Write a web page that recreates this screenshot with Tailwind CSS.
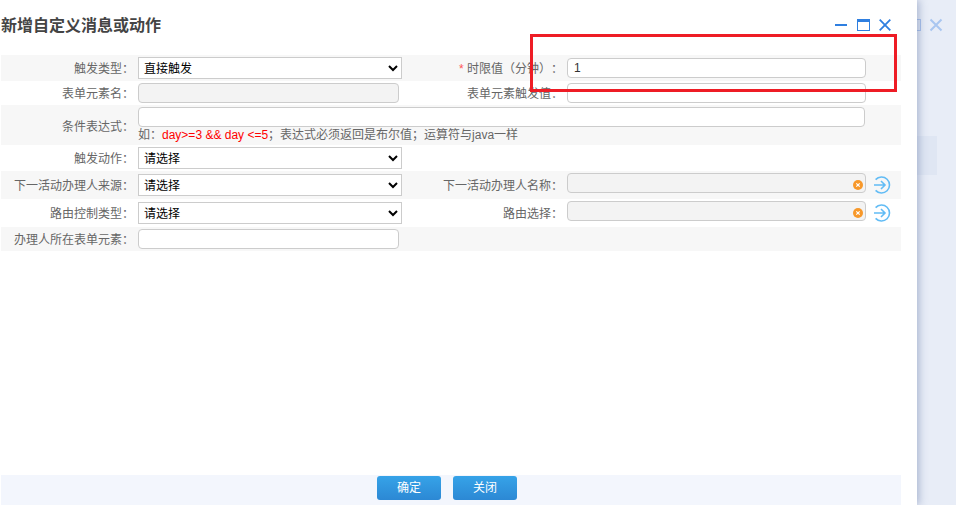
<!DOCTYPE html>
<html lang="zh-CN">
<head>
  <meta charset="UTF-8">
  <title>新增自定义消息或动作</title>
  <script src="https://cdn.jsdelivr.net/npm/@tailwindcss/browser@4"></script>
</head>
<body class="bg-[#e8edf7] font-['Liberation_Sans','Noto_Sans_CJK_SC',sans-serif] text-xs text-[#666] [text-spacing-trim:space-all]">
  <div class="relative h-[505px] w-[956px] overflow-hidden">
    <!-- page behind the dialog -->
    <div class="absolute left-[917px] top-[136px] h-[39px] w-[20px] bg-[#dfe6f3]"></div>
    <div class="absolute left-[914px] top-[19px] h-[12px] w-[7px] border border-[#a9c2ec] bg-[#dfe6f3]"></div>
    <svg class="absolute left-[929px] top-[18px]" width="14" height="14" viewBox="0 0 14 14" fill="none" stroke="#a9c6f0" stroke-width="2"><path d="M1.500 1.500l11 11M12.500 1.500l-11 11"/></svg>

    <!-- dialog -->
    <div class="absolute inset-y-0 left-0 flex w-[917px] flex-col bg-white pl-px pr-[16px] shadow-[2px_0_8px_rgba(90,110,160,0.45)]">
      <div class="flex h-[55px] items-start justify-between">
        <h1 class="pt-[13px] text-base leading-[25px] font-bold text-[#444]">新增自定义消息或动作</h1>
        <div class="mt-[19px] mr-[10px] flex items-center gap-[10px]">
          <svg width="12" height="12" viewBox="0 0 12 12" fill="#2f7fe0"><rect y="5" width="12" height="2"/></svg>
          <svg width="13" height="12" viewBox="0 0 13 12" fill="none" stroke="#2f7fe0"><rect x="0.500" y="0.500" width="12" height="11"/><rect x="0" y="0" width="13" height="3" fill="#2f7fe0" stroke="none"/></svg>
          <svg class="-ml-px" width="12" height="12" viewBox="0 0 12 12" fill="none" stroke="#2f7fe0" stroke-width="1.800"><path d="M0.700 0.700l10.600 10.600M11.300 0.700l-10.600 10.600"/></svg>
        </div>
      </div>

      <!-- 表单 -->
      <div class="flex h-[26px] items-center bg-[#f7f7f7]">
        <label class="w-[133px] pt-px text-right">触发类型：</label>
        <div class="w-[296px] pl-1"><select class="h-[22px] w-[264px] border border-[#ccc] bg-white pt-px pl-px text-xs text-black"><option>直接触发</option></select></div>
        <label class="w-[133px] pt-px text-right"><span class="text-[#f55]">* </span>时限值（分钟）：</label>
        <div class="pl-1"><input value="1" class="block h-[20px] w-[299px] rounded border border-[#ccc] bg-white px-[6px] text-xs text-[#333]"></div>
      </div>
      <div class="flex h-[24px] items-center">
        <label class="w-[133px] pt-px text-right">表单元素名：</label>
        <div class="w-[296px] pl-1"><input disabled class="block h-[20px] w-[261px] rounded border border-[#ccc] bg-[#f3f3f3]"></div>
        <label class="w-[133px] pt-px text-right">表单元素触发值：</label>
        <div class="pl-1"><input class="block h-[20px] w-[299px] rounded border border-[#ccc] bg-white"></div>
      </div>
      <div class="flex h-[40px] items-center bg-[#f7f7f7]">
        <label class="w-[133px] pt-[3px] text-right">条件表达式：</label>
        <div class="pt-px pl-1">
          <input class="block h-[20px] w-[727px] rounded border border-[#ccc] bg-white">
          <p class="leading-[17px]">如：<span class="text-[#f00]">day&gt;=3 &amp;&amp; day &lt;=5</span>；表达式必须返回是布尔值；运算符与java一样</p>
        </div>
      </div>
      <div class="flex h-[26px] items-center">
        <label class="w-[133px] pt-px text-right">触发动作：</label>
        <div class="pl-1"><select class="h-[22px] w-[264px] border border-[#ccc] bg-white pt-px pl-px text-xs text-black"><option>请选择</option></select></div>
      </div>
      <div class="flex h-[28px] items-center bg-[#f7f7f7]">
        <label class="w-[133px] pt-px text-right">下一活动办理人来源：</label>
        <div class="w-[296px] pl-1"><select class="h-[22px] w-[264px] border border-[#ccc] bg-white pt-px pl-px text-xs text-black"><option>请选择</option></select></div>
        <label class="w-[133px] whitespace-nowrap pt-px text-right">下一活动办理人名称：</label>
        <div class="flex items-center pl-1">
          <div class="relative mb-1 h-[20px] w-[299px] rounded border border-[#ccc] bg-[#f3f3f3]">
            <svg class="absolute top-[6px] right-[2px]" width="10" height="10" viewBox="0 0 10 10"><circle cx="5" cy="5" r="5" fill="#f7982a"/><path d="M3.300 3.300l3.400 3.400M6.700 3.300l-3.400 3.400" stroke="#fff" stroke-width="1.200"/></svg>
          </div>
          <svg class="ml-[7px]" width="18" height="18" viewBox="0 0 18 18" fill="none" stroke="#62bcf5" stroke-width="1.600"><path d="M2.600 3.600a8 8 0 1 1 0 10.800M1 9h11M8 5l4 4-4 4"/></svg>
        </div>
      </div>
      <div class="flex h-[28px] items-center">
        <label class="w-[133px] pt-px text-right">路由控制类型：</label>
        <div class="w-[296px] pl-1"><select class="h-[22px] w-[264px] border border-[#ccc] bg-white pt-px pl-px text-xs text-black"><option>请选择</option></select></div>
        <label class="w-[133px] pt-px text-right">路由选择：</label>
        <div class="flex items-center pl-1">
          <div class="relative mb-1 h-[20px] w-[299px] rounded border border-[#ccc] bg-[#f3f3f3]">
            <svg class="absolute top-[6px] right-[2px]" width="10" height="10" viewBox="0 0 10 10"><circle cx="5" cy="5" r="5" fill="#f7982a"/><path d="M3.300 3.300l3.400 3.400M6.700 3.300l-3.400 3.400" stroke="#fff" stroke-width="1.200"/></svg>
          </div>
          <svg class="ml-[7px]" width="18" height="18" viewBox="0 0 18 18" fill="none" stroke="#62bcf5" stroke-width="1.600"><path d="M2.600 3.600a8 8 0 1 1 0 10.800M1 9h11M8 5l4 4-4 4"/></svg>
        </div>
      </div>
      <div class="flex h-[24px] items-center bg-[#f7f7f7]">
        <label class="w-[133px] pt-px text-right">办理人所在表单元素：</label>
        <div class="pl-1"><input class="block h-[20px] w-[261px] rounded border border-[#ccc] bg-white"></div>
      </div>

      <div class="flex-1"></div>

      <!-- 底部按钮 -->
      <div class="flex h-[30px] justify-center gap-[12px] bg-[#f3f6fd] pt-px pr-[8px]">
        <button class="h-[24px] w-[64px] rounded-[3px] bg-gradient-to-b from-[#36a3e8] to-[#2c88d4] text-xs text-white">确定</button>
        <button class="h-[24px] w-[64px] rounded-[3px] bg-gradient-to-b from-[#36a3e8] to-[#2c88d4] text-xs text-white">关闭</button>
      </div>
    </div>

    <!-- 红框标注 -->
    <div class="pointer-events-none absolute left-[530px] top-[34px] h-[58px] w-[367px] border-[3px] border-[#ee1c25]"></div>
  </div>
</body>
</html>
